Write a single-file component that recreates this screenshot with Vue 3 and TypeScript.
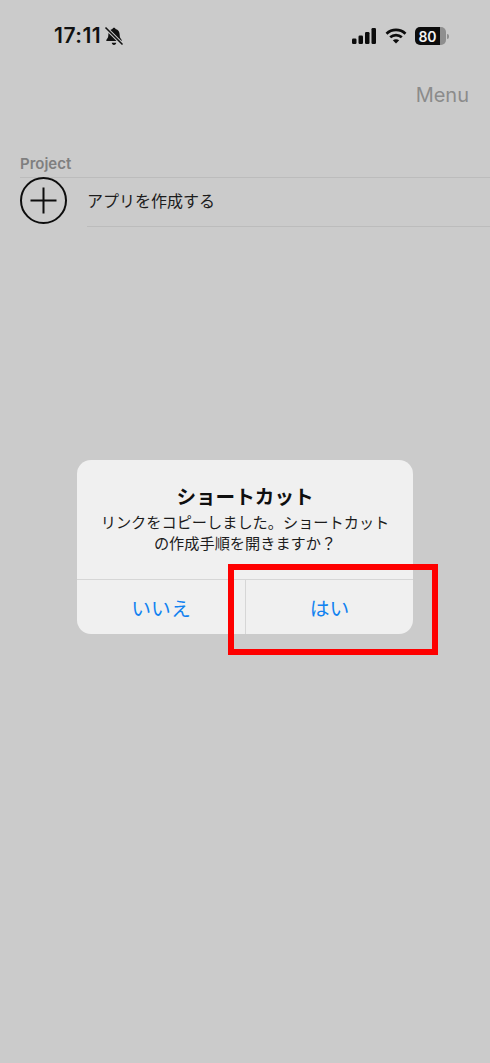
<template>
  <div class="screen">
    <header class="status-bar">
      <div class="status-left">
        <span class="time">17:11</span>
        <svg class="bell" width="20" height="20" viewBox="0 0 18 18">
          <path d="M9 1.500c.8 0 1.300.5 1.400 1.200 2.400.6 3.700 2.600 3.700 5.200 0 2 .5 3.200 1.700 4.400.4.5.1 1.200-.6 1.200H2.800c-.7 0-1-.7-.6-1.200C3.400 11.100 3.900 9.900 3.900 7.900c0-2.600 1.300-4.600 3.700-5.200.1-.7.600-1.200 1.400-1.200zM7 15h4c0 1.100-.9 2-2 2s-2-.9-2-2z" fill="#111" />
          <path d="M1.500 1.500 16.500 16.500" stroke="#cbcbcb" stroke-width="3.200" />
          <path d="M1.800 1.800 16.200 16.200" stroke="#111" stroke-width="1.500" stroke-linecap="round" />
        </svg>
      </div>
      <div class="status-right">
        <svg width="25" height="16" viewBox="0 0 25 16" fill="#0c0c0c">
          <rect x="0" y="10.500" width="4.500" height="5.500" rx="1.200" />
          <rect x="6.500" y="7.500" width="4.500" height="8.500" rx="1.200" />
          <rect x="13" y="4" width="4.500" height="12" rx="1.200" />
          <rect x="19.500" y="0" width="4.500" height="16" rx="1.200" />
        </svg>
        <svg width="22" height="16" viewBox="0 0 22 16" fill="none" stroke="#0c0c0c" stroke-width="2.700">
          <path d="M1.500 5.700C6.800.6 15.200.6 20.500 5.700" />
          <path d="M5.200 9.300c3.300-3 8.300-3 11.600 0" />
          <path d="M11 15.500 7.800 12.300c1.800-1.500 4.600-1.500 6.400 0z" fill="#0c0c0c" stroke="none" />
        </svg>
        <div class="battery">
          <div class="battery-body"><span>80</span></div>
          <div class="battery-tip"></div>
        </div>
      </div>
    </header>

    <nav class="nav-bar">
      <span class="menu">Menu</span>
    </nav>

    <section class="project">
      <div class="section-title">Project</div>
      <div class="row">
        <svg class="plus" width="47" height="47" viewBox="0 0 47 47" fill="none" stroke="#0d0d0d">
          <circle cx="23.500" cy="23.500" r="22.500" stroke-width="2" />
          <path d="M10.500 23.500H36.500M23.500 10.500V36.500" stroke-width="2" />
        </svg>
        <div class="row-label">アプリを作成する</div>
      </div>
    </section>

    <div class="dialog">
      <div class="dialog-body">
        <div class="dialog-title">ショートカット</div>
        <div class="dialog-message">リンクをコピーしました。ショートカットの作成手順を開きますか？</div>
      </div>
      <div class="dialog-actions">
        <div v-for="label in actions" :key="label" class="dialog-action">{{ label }}</div>
      </div>
    </div>

    <div class="highlight"></div>
  </div>
</template>

<script setup lang="ts">
const actions: string[] = ['いいえ', 'はい']
</script>

<style scoped>
.screen {
  position: relative;
  width: 490px;
  height: 1063px;
  overflow: hidden;
  background: #cbcbcb;
  color: #111;
  font-family: Inter, "Noto Sans CJK JP", sans-serif;
}

.status-bar {
  display: flex;
  justify-content: space-between;
  align-items: center;
  height: 28px;
  padding: 22px 41px 0 54px;
}

.status-left {
  display: flex;
  align-items: center;
  gap: 3px;
}

.time {
  font-size: 21px;
  font-weight: 600;
  line-height: 28px;
  letter-spacing: 0.5px;
}

.status-right {
  display: flex;
  align-items: center;
  gap: 8px;
}

.battery {
  display: flex;
  align-items: center;
  gap: 1px;
}

.battery-body {
  display: flex;
  align-items: center;
  width: 31px;
  height: 18px;
  border-radius: 5px;
  background: linear-gradient(90deg, #0c0c0c 80%, #8e8e8e 80%);
}

.battery-body span {
  width: 25px;
  color: #f4f4f4;
  font-size: 14px;
  font-weight: 600;
  text-align: center;
}

.battery-tip {
  width: 2px;
  height: 5px;
  border-radius: 0 2px 2px 0;
  background: #8e8e8e;
}

.nav-bar {
  display: flex;
  justify-content: flex-end;
  padding: 31px 21px 0 0;
}

.menu {
  color: #8b8b8b;
  font-family: Inter, sans-serif;
  font-size: 20px;
  line-height: 28px;
}

.project {
  padding: 46px 0 0 20px;
}

.section-title {
  height: 22px;
  color: #7f7f7f;
  font-size: 15px;
  font-weight: 600;
  line-height: 18px;
  border-bottom: 1px solid #bcbcbc;
}

.row {
  display: flex;
  align-items: flex-start;
  gap: 20px;
}

.plus {
  flex: none;
  margin-top: -1px;
}

.row-label {
  flex: 1;
  height: 48px;
  font-size: 16px;
  line-height: 46px;
  color: #1c1c1c;
  border-bottom: 1px solid #bcbcbc;
}

.dialog {
  position: absolute;
  left: 77px;
  top: 460px;
  width: 336px;
  height: 174px;
  display: flex;
  flex-direction: column;
  border-radius: 14px;
  background: #f0f0f0;
}

.dialog-body {
  flex: 1;
  padding: 24px 20px 0;
  text-align: center;
}

.dialog-title {
  font-size: 19.600px;
  font-weight: 700;
  line-height: 26px;
  color: #0f0f0f;
}

.dialog-message {
  font-size: 15.200px;
  line-height: 21px;
  margin-top: 2px;
  color: #1c1c1c;
}

.dialog-actions {
  display: grid;
  grid-template-columns: 168px 1fr;
  height: 54px;
  border-top: 1px solid #d6d6d6;
}

.dialog-action {
  display: flex;
  align-items: center;
  justify-content: center;
  color: #1282f0;
  font-size: 19.800px;
}

.dialog-action + .dialog-action {
  border-left: 1px solid #d6d6d6;
}

.highlight {
  position: absolute;
  left: 228px;
  top: 564px;
  width: 210px;
  height: 91px;
  box-sizing: border-box;
  border: 6px solid #fe0000;
}
</style>
